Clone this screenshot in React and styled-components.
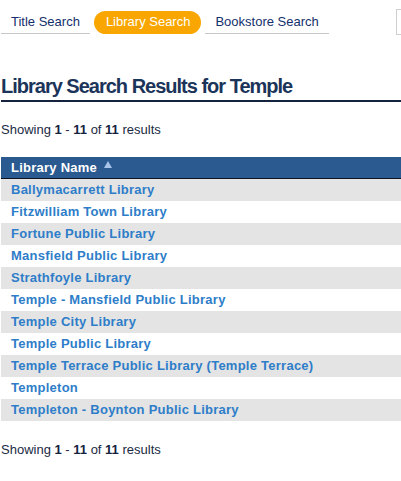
import React from "react";
import styled, { createGlobalStyle } from "styled-components";

const Global = createGlobalStyle`
  html, body { margin: 0; padding: 0; background: #fff; }
  body { font-family: "Liberation Sans", Arial, sans-serif; overflow: hidden; }
`;

const Page = styled.div`
  width: 401px;
  height: 481px;
  padding: 0 0 0 1px;
  box-sizing: border-box;
  overflow: hidden;
  position: relative;
`;

const TabBar = styled.div`
  display: flex;
  align-items: flex-end;
  gap: 4px;
  margin-top: 11px;
  height: 23px;
`;

const Tab = styled.a`
  display: block;
  height: 23px;
  line-height: 22px;
  padding: 0 10px;
  font-size: 13px;
  color: #13306b;
  box-sizing: border-box;
  cursor: pointer;
  ${(p) =>
    p.$active
      ? `background: #f9a600; color: #fff; border-radius: 12px; padding: 0 11px 0 12px;`
      : `border-bottom: 1px solid #c8c8c8;`}
`;

const SearchBox = styled.div`
  position: absolute;
  left: 396px;
  top: 9px;
  width: 120px;
  height: 26px;
  border: 1px solid #cfcfcf;
  box-sizing: border-box;
`;

const Heading = styled.h2`
  margin: 40px 0 0;
  font-size: 20px;
  line-height: 24px;
  font-weight: bold;
  letter-spacing: -1px;
  color: #1b3459;
  padding-bottom: 2px;
  border-bottom: 2px solid #15233f;
`;

const Summary = styled.p`
  margin: ${(p) => p.$top}px 0 0;
  font-size: 13px;
  line-height: 16px;
  color: #1a2a44;
  b { color: #15233f; }
`;

const Table = styled.div`
  margin-top: 19px;
  display: flex;
  flex-direction: column;
`;

const HeaderRow = styled.div`
  height: 22px;
  background: #2b5a91;
  border-bottom: 1px solid #0c1424;
  box-sizing: border-box;
  display: flex;
  align-items: center;
  padding-left: 10px;
  color: #fff;
  font-weight: bold;
  font-size: 13px;
  letter-spacing: 0.25px;
  gap: 7px;
`;

const SortArrow = styled.svg`
  width: 8px;
  height: 7px;
  margin-top: -6px;
`;

const Row = styled.div`
  height: 22px;
  line-height: 22px;
  padding-left: 10px;
  background: ${(p) => (p.$alt ? "#e4e4e4" : "#fff")};
  font-size: 13px;
  font-weight: bold;
  letter-spacing: 0.25px;
  color: #2e7dc9;
`;

const libraries = [
  "Ballymacarrett Library",
  "Fitzwilliam Town Library",
  "Fortune Public Library",
  "Mansfield Public Library",
  "Strathfoyle Library",
  "Temple - Mansfield Public Library",
  "Temple City Library",
  "Temple Public Library",
  "Temple Terrace Public Library (Temple Terrace)",
  "Templeton",
  "Templeton - Boynton Public Library",
];

const Showing = ({ top }) => (
  <Summary $top={top}>
    Showing <b>1</b> - <b>11</b> of <b>11</b> results
  </Summary>
);

export default function App() {
  return (
    <Page>
      <Global />
      <TabBar>
        <Tab>Title Search</Tab>
        <Tab $active>Library Search</Tab>
        <Tab>Bookstore Search</Tab>
      </TabBar>
      <SearchBox />
      <Heading>Library Search Results for Temple</Heading>
      <Showing top={20} />
      <Table>
        <HeaderRow>
          Library Name
          <SortArrow viewBox="0 0 8 7">
            <path d="M4 0 L8 7 L0 7 Z" fill="#a9c4ea" />
          </SortArrow>
        </HeaderRow>
        {libraries.map((name, i) => (
          <Row key={name} $alt={i % 2 === 0}>
            {name}
          </Row>
        ))}
      </Table>
      <Showing top={21} />
    </Page>
  );
}
